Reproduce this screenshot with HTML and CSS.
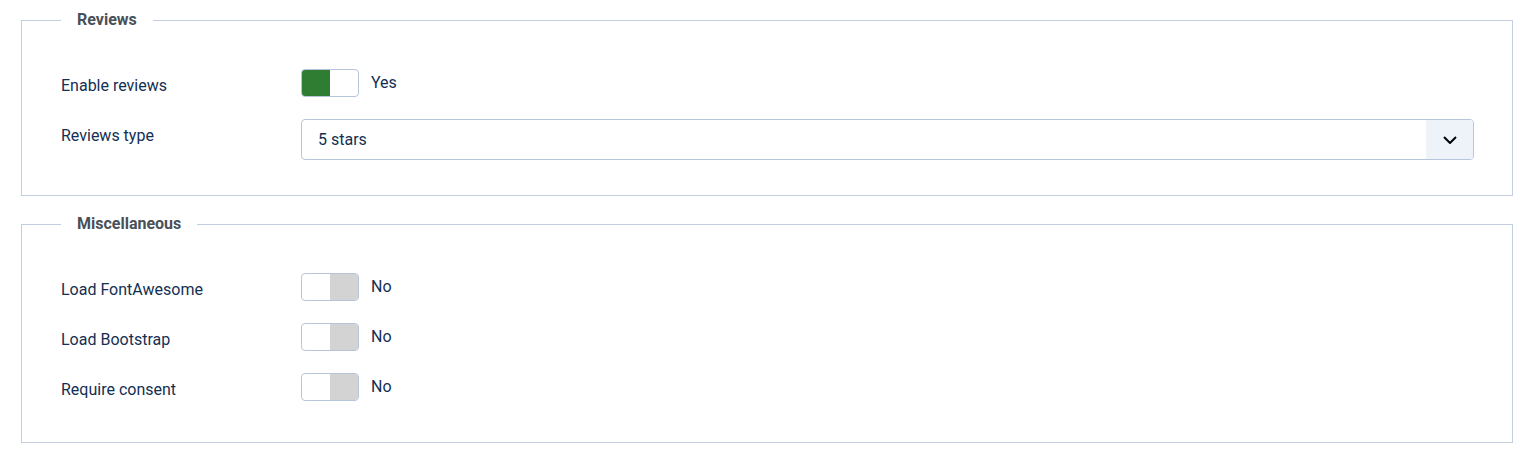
FILE: index.html
```html
<!DOCTYPE html>
<html lang="en">
<head>
    <meta charset="UTF-8">
    <title>Options</title>
    <link rel="stylesheet" href="styles.css">
</head>
<body>
    <fieldset class="options-group">
        <legend>Reviews</legend>

        <div class="control-group">
            <label class="control-label">Enable reviews</label>
            <div class="controls">
                <span class="switcher on"><span class="half left"></span><span class="half right"></span></span>
                <span class="switcher-text">Yes</span>
            </div>
        </div>

        <div class="control-group select-row">
            <label class="control-label">Reviews type</label>
            <div class="controls">
                <div class="custom-select">
                    <span class="select-value">5 stars</span>
                    <span class="select-arrow">
                        <svg width="14" height="8" viewBox="0 0 14 8"><polyline points="1,1 7,7 13,1" fill="none" stroke="#000" stroke-width="2"/></svg>
                    </span>
                </div>
            </div>
        </div>
    </fieldset>

    <fieldset class="options-group">
        <legend>Miscellaneous</legend>

        <div class="control-group">
            <label class="control-label">Load FontAwesome</label>
            <div class="controls">
                <span class="switcher off"><span class="half left"></span><span class="half right"></span></span>
                <span class="switcher-text">No</span>
            </div>
        </div>

        <div class="control-group">
            <label class="control-label">Load Bootstrap</label>
            <div class="controls">
                <span class="switcher off"><span class="half left"></span><span class="half right"></span></span>
                <span class="switcher-text">No</span>
            </div>
        </div>

        <div class="control-group">
            <label class="control-label">Require consent</label>
            <div class="controls">
                <span class="switcher off"><span class="half left"></span><span class="half right"></span></span>
                <span class="switcher-text">No</span>
            </div>
        </div>
    </fieldset>
</body>
</html>
```

FILE: styles.css
```css
/* Page */
body {
    font-family: Roboto, "Liberation Sans", sans-serif;
    font-size: 16px;
    color: #132f53;
    background-color: #ffffff;
    margin: 0;
    padding: 9px 21px 0;
}

/* Fieldsets with legend in the top border */
.options-group {
    border: 1px solid #c3cfe0;
    margin: 0 0 17px;
    padding: 38px 38px 35px 39px;
}

.options-group legend {
    font-size: 16px;
    font-weight: bold;
    line-height: 22px;
    color: #495057;
    padding: 0 16px;
}

/* One label + control row */
.control-group {
    display: flex;
    align-items: flex-start;
    height: 34px;
    margin-bottom: 16px;
}

.control-group:last-child {
    margin-bottom: 0;
}

.control-group.select-row {
    height: 41px;
}

.control-label {
    width: 240px;
    flex-shrink: 0;
    padding-top: 5px;
    line-height: 24px;
}

.controls {
    flex: 1;
    display: flex;
    align-items: center;
}

/* Yes / No switch */
.switcher {
    display: flex;
    width: 56px;
    height: 26px;
    border: 1px solid #b6c5da;
    border-radius: 4px;
    overflow: hidden;
}

.switcher .half {
    flex: 1;
}

.switcher.on .left {
    background-color: #2f7d32;
}

.switcher.off .right {
    background-color: #d3d3d3;
}

.switcher-text {
    margin-left: 12px;
    line-height: 24px;
}

/* Select box */
.custom-select {
    flex: 1;
    display: flex;
    align-items: center;
    height: 39px;
    border: 1px solid #b6c5da;
    border-radius: 4px;
    overflow: hidden;
}

.select-value {
    flex: 1;
    padding-left: 16px;
}

.select-arrow {
    width: 47px;
    height: 100%;
    background-color: #eef3fa;
    display: flex;
    align-items: center;
    justify-content: center;
}
```
